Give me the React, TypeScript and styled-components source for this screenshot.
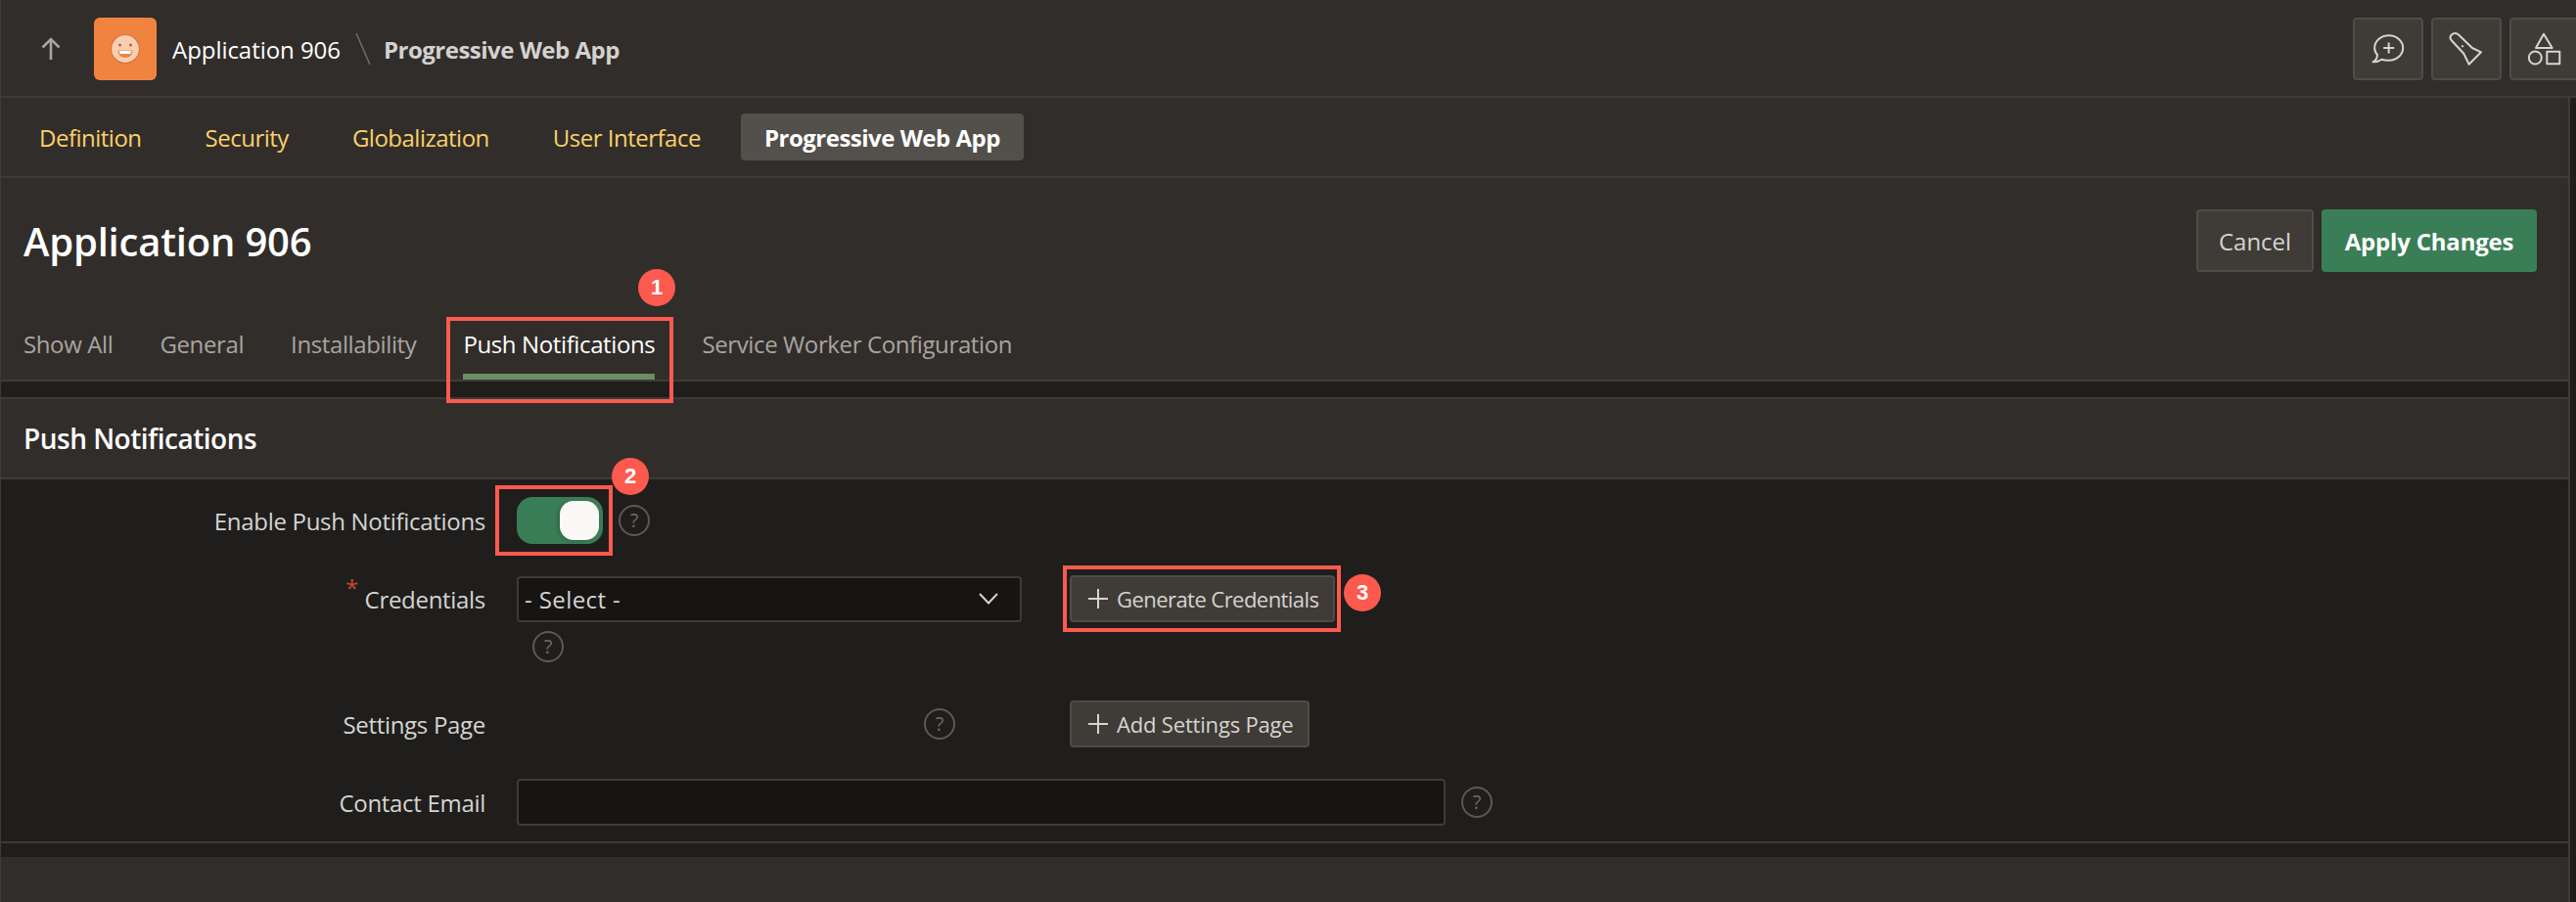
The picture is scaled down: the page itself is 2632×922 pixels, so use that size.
import React from "react";
import styled, { createGlobalStyle } from "styled-components";

const Global = createGlobalStyle`
  html, body { margin: 0; padding: 0; background: #1f1e1c; }
  * { box-sizing: border-box; }
  body { font-family: "Open Sans", "Noto Sans", "Liberation Sans", sans-serif; }
`;

const Page = styled.div`
  position: relative;
  width: 2632px;
  height: 922px;
  overflow: hidden;
  display: flex;
  flex-direction: column;
  background: #312d2a;
  color: #d6d4d1;
  font-size: 22px;
`;

const Header = styled.header`
  height: 100px;
  flex: none;
  display: flex;
  align-items: center;
  padding: 2px 0 0 35px;
  border-bottom: 2px solid #3f3b37;
  border-left: 1px solid #3f3b37;
`;

const UpIcon = styled.svg`
  width: 32px;
  height: 32px;
  margin-right: 28px;
  flex: none;
`;

const Logo = styled.svg`
  width: 64px;
  height: 64px;
  flex: none;
  margin-right: 16px;
`;

const Crumb = styled.span`
  font-size: 24px;
  letter-spacing: -0.05px;
  color: #ffffff;
`;

const CrumbSlash = styled.svg`
  width: 16px;
  height: 36px;
  margin: 0 13px 0 15px;
  flex: none;
`;

const CrumbCurrent = styled.span`
  font-size: 24px;
  font-weight: 700;
  letter-spacing: -0.5px;
  color: #d4d2cf;
`;

const Tools = styled.div`
  margin-left: auto;
  display: flex;
  gap: 8px;
  margin-right: -4px;
`;

const ToolButton = styled.button`
  width: 72px;
  height: 64px;
  padding: 0;
  display: flex;
  align-items: center;
  justify-content: center;
  background: #3f3b37;
  border: 2px solid #4f4b47;
  border-radius: 4px;
`;

const ToolIcon = styled.svg`
  width: 36px;
  height: 36px;
`;

const Shell = styled.div`
  flex: 1;
  display: flex;
  min-height: 0;
`;

const Gutter = styled.div`
  width: 8px;
  flex: none;
  background: #1f1e1c;
  border-left: 2px solid #3f3b37;
`;

const Main = styled.main`
  flex: 1;
  min-width: 0;
  display: flex;
  flex-direction: column;
  border-left: 1px solid #3f3b37;
`;

const Nav = styled.nav`
  height: 82px;
  flex: none;
  display: flex;
  align-items: center;
  padding-left: 15px;
  border-bottom: 2px solid #3f3b37;
`;

const NavItem = styled.a<{ $active?: boolean }>`
  height: 48px;
  display: flex;
  align-items: center;
  padding: 0 24px;
  margin-right: ${(p) => (p.$active ? 0 : 17)}px;
  border-radius: 4px;
  white-space: nowrap;
  font-size: 24px;
  font-weight: ${(p) => (p.$active ? 700 : 400)};
  letter-spacing: ${(p) => (p.$active ? -0.5 : -0.5)}px;
  color: ${(p) => (p.$active ? "#ffffff" : "#fbd06b")};
  background: ${(p) => (p.$active ? "#534f4b" : "transparent")};
`;

const TitleBar = styled.div`
  height: 130px;
  flex: none;
  display: flex;
  align-items: flex-start;
  justify-content: space-between;
  padding: 32px 32px 0 23px;
`;

const Title = styled.h1`
  margin: 0;
  height: 64px;
  line-height: 66px;
  font-size: 40px;
  font-weight: 600;
  letter-spacing: -0.2px;
  color: #ffffff;
`;

const TitleActions = styled.div`
  display: flex;
  gap: 8px;
`;

const Button = styled.button<{ $primary?: boolean }>`
  height: 64px;
  padding: 0;
  width: ${(p) => (p.$primary ? 220 : 120)}px;
  font-family: inherit;
  font-size: 24px;
  font-weight: ${(p) => (p.$primary ? 700 : 400)};
  letter-spacing: ${(p) => (p.$primary ? -0.2 : -0.05)}px;
  color: ${(p) => (p.$primary ? "#ffffff" : "#d6d4d1")};
  background: ${(p) => (p.$primary ? "#3a7e57" : "#3f3b37")};
  border: 2px solid ${(p) => (p.$primary ? "#3a7e57" : "#4f4b47")};
  border-radius: 4px;
`;

const TabBar = styled.div`
  height: 78px;
  flex: none;
  display: flex;
  gap: 48px;
  padding-left: 23px;
  border-bottom: 2px solid #3f3b37;
`;

const Tab = styled.a<{ $active?: boolean }>`
  height: 76px;
  display: flex;
  align-items: center;
  padding-top: 8px;
  white-space: nowrap;
  font-size: 24px;
  letter-spacing: -0.38px;
  color: ${(p) => (p.$active ? "#ffffff" : "#a8a5a0")};
  border-bottom: 6px solid ${(p) => (p.$active ? "#6a8f60" : "transparent")};
`;

const Strip = styled.div`
  height: 18px;
  flex: none;
  background: #1f1e1c;
  border-bottom: 2px solid #3f3b37;
`;

const SectionHeader = styled.h2`
  height: 82px;
  flex: none;
  margin: 0;
  display: flex;
  align-items: center;
  padding-left: 23px;
  font-size: 28px;
  font-weight: 600;
  letter-spacing: -0.5px;
  color: #ffffff;
  border-bottom: 2px solid #3f3b37;
`;

const Form = styled.section`
  height: 372px;
  flex: none;
  background: #1f1e1c;
  border-bottom: 2px solid #3f3b37;
  display: flex;
  flex-direction: column;
`;

const Row = styled.div<{ $top: number }>`
  display: flex;
  align-items: center;
  height: 48px;
  margin-top: ${(p) => p.$top}px;
`;

const HelpRow = styled.div`
  height: 32px;
  margin-top: 8px;
  padding-left: 543px;
`;

const Label = styled.label`
  position: relative;
  width: 495px;
  flex: none;
  margin-right: 32px;
  text-align: right;
  font-size: 24px;
  letter-spacing: -0.3px;
  color: #d6d4d1;
`;

const Required = styled.span`
  position: absolute;
  left: 352px;
  top: -7px;
  font-size: 24px;
  line-height: 24px;
  color: #c74634;
`;

const Toggle = styled.span`
  width: 88px;
  height: 48px;
  flex: none;
  display: flex;
  justify-content: flex-end;
  align-items: center;
  padding-right: 4px;
  border-radius: 16px;
  background: #3a7e57;
`;

const Knob = styled.span`
  width: 40px;
  height: 40px;
  border-radius: 14px;
  background: #fbf9f8;
  box-shadow: -2px 1px 4px rgba(0, 0, 0, 0.2);
`;

const Help = styled.span<{ $left?: number }>`
  width: 32px;
  height: 32px;
  display: inline-flex;
  align-items: center;
  justify-content: center;
  flex: none;
  margin-left: ${(p) => p.$left ?? 0}px;
  border: 2px solid #5c5955;
  border-radius: 50%;
  font-size: 20px;
  line-height: 1;
  color: #6f6c68;
`;

const Select = styled.div`
  width: 516px;
  height: 47px;
  flex: none;
  display: flex;
  align-items: center;
  justify-content: space-between;
  padding: 0 16px 0 6px;
  background: #161513;
  border: 2px solid #3f3b37;
  border-radius: 4px;
  font-size: 24px;
  letter-spacing: 0.4px;
  color: #d6d4d1;
`;

const Chevron = styled.svg`
  width: 32px;
  height: 32px;
`;

const ActionButton = styled.button<{ $left: number; $track: number }>`
  height: 48px;
  flex: none;
  display: flex;
  align-items: center;
  gap: 7px;
  margin-left: ${(p) => p.$left}px;
  padding: 0 14px 0 15px;
  font-family: inherit;
  font-size: 22px;
  letter-spacing: ${(p) => p.$track}px;
  white-space: nowrap;
  color: #d6d4d1;
  background: #3f3b37;
  border: 2px solid #4f4b47;
  border-radius: 4px;
`;

const PlusIcon = styled.svg`
  width: 24px;
  height: 24px;
  flex: none;
`;

const TextInput = styled.div`
  width: 949px;
  height: 48px;
  flex: none;
  background: #161513;
  border: 2px solid #3f3b37;
  border-radius: 4px;
`;

const BottomStrip = styled.div`
  height: 14px;
  flex: none;
  background: #1f1e1c;
`;

const Callout = styled.div<{ $x: number; $y: number; $w: number; $h: number }>`
  position: absolute;
  left: ${(p) => p.$x}px;
  top: ${(p) => p.$y}px;
  width: ${(p) => p.$w}px;
  height: ${(p) => p.$h}px;
  border: 4px solid #fc5a4e;
`;

const Badge = styled.div<{ $x: number; $y: number }>`
  position: absolute;
  left: ${(p) => p.$x - 19}px;
  top: ${(p) => p.$y - 19}px;
  width: 38px;
  height: 38px;
  display: flex;
  align-items: center;
  justify-content: center;
  border-radius: 50%;
  background: #fc5a4e;
  font-family: "Liberation Sans", Arial, sans-serif;
  font-size: 22px;
  font-weight: 700;
  color: #ffffff;
`;

const Plus = () => (
  <PlusIcon viewBox="0 0 24 24" fill="none" stroke="#d6d4d1" strokeWidth="2">
    <path d="M12 2v20M2 12h20" />
  </PlusIcon>
);

export default function App() {
  return (
    <Page>
      <Global />
      <Header>
        <UpIcon viewBox="0 0 32 32" fill="none" stroke="#a8a5a0" strokeWidth="2.6">
          <path d="M16 27V6M7.5 14.5 16 6l8.500 8.500" />
        </UpIcon>
        <Logo viewBox="0 0 64 64">
          <rect width="64" height="64" rx="6" fill="#f0843f" />
          <circle cx="32" cy="32" r="14.500" fill="#f9cfb3" stroke="#d2763e" strokeWidth="1.200" />
          <circle cx="26.500" cy="28" r="1.500" fill="#c4602a" />
          <circle cx="37.500" cy="28" r="1.500" fill="#c4602a" />
          <path d="M24.500 33.500h15c0 4.800-3.200 7.500-7.500 7.500s-7.500-2.700-7.500-7.500Z" fill="#e9854a" />
          <path d="M25.800 34h12.400c-.1 1.200-.4 2.200-.9 3H26.700c-.5-.8-.8-1.800-.9-3Z" fill="#ffffff" />
        </Logo>
        <Crumb>Application 906</Crumb>
        <CrumbSlash viewBox="0 0 16 36" fill="none" stroke="#6f6c68" strokeWidth="1.500">
          <path d="M1 2 15 34" />
        </CrumbSlash>
        <CrumbCurrent>Progressive Web App</CrumbCurrent>
        <Tools>
          <ToolButton aria-label="Feedback">
            <ToolIcon viewBox="0 0 36 36" fill="none" stroke="#d6d4d1" strokeWidth="2" strokeLinejoin="round">
              <path d="M7 24C7 27 5 30 2.500 31.300 6 31.500 9 30.500 11.500 28.700 13.500 29.400 16 29.700 18.700 29.700 26.700 29.700 33.200 24 33.200 17 33.200 10 26.700 4.300 18.700 4.300 10.700 4.300 4.200 10 4.200 17 4.200 19.500 5 22 7 24Z" />
              <path d="M18.700 11.500v11M13.200 17h11" />
            </ToolIcon>
          </ToolButton>
          <ToolButton aria-label="Flashlight">
            <ToolIcon viewBox="0 0 36 36" fill="none" stroke="#d6d4d1" strokeWidth="2" strokeLinejoin="round">
              <path d="M3 9.500 15.300 22.700 20.700 33.700 33 21.300 24 17 10 3.500C8 1.500 5 1.500 3 3.500 1 5.500 1 7.500 3 9.500Z" />
              <circle cx="14" cy="15.300" r=".8" fill="#d6d4d1" strokeWidth="1" />
            </ToolIcon>
          </ToolButton>
          <ToolButton aria-label="Shapes">
            <ToolIcon viewBox="0 0 36 36" fill="none" stroke="#d6d4d1" strokeWidth="2" strokeLinejoin="round">
              <path d="M17 2.700 25.700 17H9Z" />
              <circle cx="8.300" cy="27" r="6.500" />
              <rect x="20.300" y="20.700" width="13" height="12.600" />
            </ToolIcon>
          </ToolButton>
        </Tools>
      </Header>
      <Shell>
        <Main>
          <Nav>
            <NavItem>Definition</NavItem>
            <NavItem>Security</NavItem>
            <NavItem>Globalization</NavItem>
            <NavItem>User Interface</NavItem>
            <NavItem $active>Progressive Web App</NavItem>
          </Nav>
          <TitleBar>
            <Title>Application 906</Title>
            <TitleActions>
              <Button>Cancel</Button>
              <Button $primary>Apply Changes</Button>
            </TitleActions>
          </TitleBar>
          <TabBar>
            <Tab>Show All</Tab>
            <Tab>General</Tab>
            <Tab>Installability</Tab>
            <Tab $active>Push Notifications</Tab>
            <Tab>Service Worker Configuration</Tab>
          </TabBar>
          <Strip />
          <SectionHeader>Push Notifications</SectionHeader>
          <Form>
            <Row $top={18}>
              <Label>Enable Push Notifications</Label>
              <Toggle>
                <Knob />
              </Toggle>
              <Help $left={16}>?</Help>
            </Row>
            <Row $top={32}>
              <Label>
                <Required>*</Required>
                Credentials
              </Label>
              <Select>
                - Select -
                <Chevron viewBox="0 0 32 32" fill="none" stroke="#d6d4d1" strokeWidth="2">
                  <path d="M7 11l9 9.500L25 11" />
                </Chevron>
              </Select>
              <ActionButton $left={49} $track={-0.55}>
                <Plus />
                Generate Credentials
              </ActionButton>
            </Row>
            <HelpRow>
              <Help>?</Help>
            </HelpRow>
            <Row $top={40}>
              <Label>Settings Page</Label>
              <Help $left={416}>?</Help>
              <ActionButton $left={117} $track={-0.18}>
                <Plus />
                Add Settings Page
              </ActionButton>
            </Row>
            <Row $top={32}>
              <Label>Contact Email</Label>
              <TextInput />
              <Help $left={16}>?</Help>
            </Row>
          </Form>
          <BottomStrip />
        </Main>
        <Gutter />
      </Shell>
      <Callout $x={456} $y={324} $w={232} $h={88} />
      <Badge $x={671} $y={294}>1</Badge>
      <Callout $x={506} $y={496} $w={120} $h={72} />
      <Badge $x={644} $y={487}>2</Badge>
      <Callout $x={1086} $y={578} $w={284} $h={68} />
      <Badge $x={1392} $y={606}>3</Badge>
    </Page>
  );
}
